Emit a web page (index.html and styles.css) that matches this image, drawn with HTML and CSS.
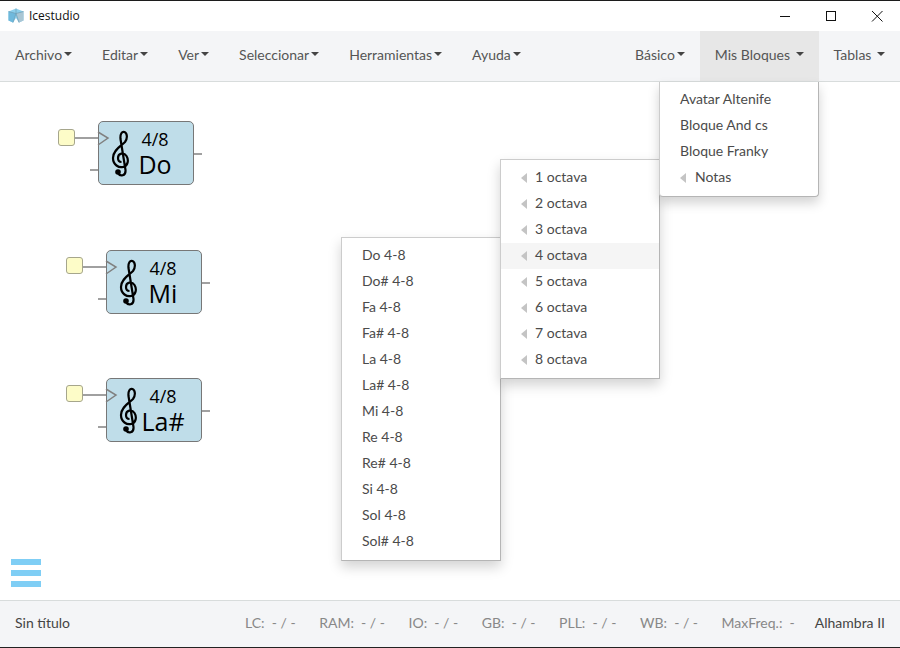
FILE: index.html
```html
<!DOCTYPE html>
<html>
<head>
<meta charset="utf-8" />
<title>Icestudio</title>
<link rel="stylesheet" href="styles.css">
</head>
<body>

<div class="titlebar">
	<svg class="logo" width="16" height="15" viewBox="0 0 16 15">
		<path d="M8 .5 L15.5 3.5 L15.5 12.5 L11 14.5 L8 10 L5 14.5 L.5 12.5 L.5 3.5 Z" fill="#8ccfec"/>
		<path d="M8 5.5 L15.5 3.5 L15.5 12.5 L11 14.5 Z" fill="#a9c6d4"/>
		<path d="M8 5.5 L.5 3.5 L.5 12.5 L5 14.5 Z" fill="#6fb9dc"/>
		<path d="M8 .5 L8 5.5 M.5 3.5 L8 5.5 L15.5 3.5 M8 5.5 L5 14.5 M8 5.5 L11 14.5" fill="none" stroke="#6d9db5" stroke-width=".7"/>
	</svg>
	<span class="apptitle">Icestudio</span>
	<div class="winbtns">
		<svg width="46" height="31" viewBox="0 0 46 31"><path d="M18 15.5 H28" stroke="#111" fill="none"/></svg>
		<svg width="46" height="31" viewBox="0 0 46 31"><rect x="18.5" y="10.5" width="9" height="9" stroke="#111" fill="none"/></svg>
		<svg width="46" height="31" viewBox="0 0 46 31"><path d="M18 10 L28.5 20.5 M28.5 10 L18 20.5" stroke="#111" fill="none"/></svg>
	</div>
</div>

<nav class="menubar">
	<a class="menu">Archivo<i class="caret"></i></a>
	<a class="menu">Editar<i class="caret"></i></a>
	<a class="menu">Ver<i class="caret"></i></a>
	<a class="menu">Seleccionar<i class="caret"></i></a>
	<a class="menu">Herramientas<i class="caret"></i></a>
	<a class="menu">Ayuda<i class="caret"></i></a>
	<span class="spacer"></span>
	<a class="menu">Básico<i class="caret"></i></a>
	<a class="menu open">Mis Bloques <i class="caret wide"></i></a>
	<a class="menu">Tablas <i class="caret wide"></i></a>
</nav>

<main class="canvas">
	<!-- bloques del diagrama -->
	<div class="pin pin1"></div>
	<div class="pin pin2"></div>
	<div class="pin pin3"></div>

	<div class="block b1">
		<svg class="wires" width="130" height="70" viewBox="0 0 130 70"><use href="#wires"/></svg>
		<svg class="clef" width="20" height="48" viewBox="0 0 20 48"><use href="#clef"/></svg>
		<div class="blocktext"><span class="frac">4/8</span><span class="note">Do</span></div>
	</div>
	<div class="block b2">
		<svg class="wires" width="130" height="70" viewBox="0 0 130 70"><use href="#wires"/></svg>
		<svg class="clef" width="20" height="48" viewBox="0 0 20 48"><use href="#clef"/></svg>
		<div class="blocktext"><span class="frac">4/8</span><span class="note">Mi</span></div>
	</div>
	<div class="block b3">
		<svg class="wires" width="130" height="70" viewBox="0 0 130 70"><use href="#wires"/></svg>
		<svg class="clef" width="20" height="48" viewBox="0 0 20 48"><use href="#clef"/></svg>
		<div class="blocktext"><span class="frac">4/8</span><span class="note">La#</span></div>
	</div>

	<div class="burger"><span></span><span></span><span></span></div>

	<ul class="dropdown dd1">
		<li>Avatar Altenife</li>
		<li>Bloque And cs</li>
		<li>Bloque Franky</li>
		<li class="sub"><i class="arrow"></i>Notas</li>
	</ul>
	<ul class="dropdown dd2">
		<li class="sub"><i class="arrow"></i>1 octava</li>
		<li class="sub"><i class="arrow"></i>2 octava</li>
		<li class="sub"><i class="arrow"></i>3 octava</li>
		<li class="sub hover"><i class="arrow"></i>4 octava</li>
		<li class="sub"><i class="arrow"></i>5 octava</li>
		<li class="sub"><i class="arrow"></i>6 octava</li>
		<li class="sub"><i class="arrow"></i>7 octava</li>
		<li class="sub"><i class="arrow"></i>8 octava</li>
	</ul>
	<ul class="dropdown dd3">
		<li>Do 4-8</li>
		<li>Do# 4-8</li>
		<li>Fa 4-8</li>
		<li>Fa# 4-8</li>
		<li>La 4-8</li>
		<li>La# 4-8</li>
		<li>Mi 4-8</li>
		<li>Re 4-8</li>
		<li>Re# 4-8</li>
		<li>Si 4-8</li>
		<li>Sol 4-8</li>
		<li>Sol# 4-8</li>
	</ul>
</main>

<footer class="statusbar">
	<span class="filename">Sin título</span>
	<span class="spacer"></span>
	<span class="stat">LC:&nbsp; - / -</span>
	<span class="stat">RAM:&nbsp; - / -</span>
	<span class="stat">IO:&nbsp; - / -</span>
	<span class="stat">GB:&nbsp; - / -</span>
	<span class="stat">PLL:&nbsp; - / -</span>
	<span class="stat">WB:&nbsp; - / -</span>
	<span class="stat">MaxFreq.:&nbsp; -</span>
	<span class="board">Alhambra II</span>
</footer>

<svg class="defs" width="0" height="0">
	<defs>
		<g id="wires" fill="none" stroke="#808080" stroke-width="1.5">
			<path d="M0 16 H23"/>
			<path d="M23 10 L33 16 L23 23"/>
			<path d="M15 48 H23"/>
			<path d="M119 32 H127"/>
		</g>
		<g id="clef">
			<path d="M7 43 C9 47 15 46 14.5 40 L9.5 9 C9 4 11 1 13.5 2 C16 3 17 8 14 12 C10 16 2 20 2 28 C2 35 8 38 12 37 C17 36 18 30 15.5 26 C13 22 7 23 7 28 C7 31 9 32 10.5 32" fill="none" stroke="#000" stroke-width="2.2"/>
			<circle cx="7" cy="42" r="2.8" fill="#000"/>
		</g>
	</defs>
</svg>

</body>
</html>
```

FILE: styles.css
```css
html, body {
	margin: 0;
	padding: 0;
}
body {
	width: 900px;
	height: 648px;
	overflow: hidden;
	display: flex;
	flex-direction: column;
	font-family: Lato, "Liberation Sans", sans-serif;
	font-size: 14px;
	color: #4b4b4b;
	background: #fff;
}

/* barra de titulo */
.titlebar {
	height: 30px;
	flex: none;
	display: flex;
	align-items: center;
	border-top: 1px solid #1c1c1c;
	background: #fff;
}
.logo {
	margin-left: 8px;
	margin-right: 5px;
	margin-bottom: 2px;
}
.apptitle {
	font-family: "Open Sans", sans-serif;
	font-size: 12px;
	color: #111;
	padding-bottom: 2px;
}
.winbtns {
	margin-left: auto;
	display: flex;
	padding-right: 0;
}

/* menu */
.menubar {
	height: 50px;
	flex: none;
	display: flex;
	align-items: stretch;
	background: #f4f5f7;
	border-bottom: 1px solid #d8dcdc;
}
.menu {
	display: flex;
	align-items: center;
	padding: 0 15px 4px;
	white-space: pre;
	font-size: 14px;
	color: #555;
}
.menu.open {
	background: #e7e7e7;
}
.caret {
	display: inline-block;
	width: 0;
	height: 0;
	margin-left: 2px;
	border-top: 4px solid #444;
	border-left: 4px solid transparent;
	border-right: 4px solid transparent;
}
.spacer {
	flex: 1;
}

/* lienzo */
.canvas {
	position: relative;
	flex: 1;
	background: #fff;
}
.pin {
	position: absolute;
	width: 15px;
	height: 15px;
	background: #fdfcc8;
	border: 1px solid #a6a68c;
	border-radius: 3px;
}
.pin1 { left: 58px; top: 47px; }
.pin2 { left: 66px; top: 175px; }
.pin3 { left: 66px; top: 303px; }

.block {
	position: absolute;
	width: 94px;
	height: 62px;
	background: #bfdde9;
	border: 1px solid #777;
	border-radius: 5px;
	color: #000;
}
.b1 { left: 98px; top: 39px; }
.b2 { left: 106px; top: 168px; }
.b3 { left: 106px; top: 296px; }
.wires {
	position: absolute;
	left: -24px;
	top: 0;
	overflow: visible;
}
.clef {
	position: absolute;
	left: 12px;
	top: 8px;
}
.blocktext {
	position: absolute;
	left: 26px;
	top: 5px;
	width: 60px;
	display: flex;
	flex-direction: column;
	align-items: center;
	font-family: "Open Sans", sans-serif;
}
.frac {
	font-size: 18px;
	line-height: 24px;
}
.note {
	font-size: 25px;
	line-height: 27px;
}

.burger {
	position: absolute;
	left: 11px;
	top: 477px;
	width: 30px;
	display: flex;
	flex-direction: column;
	gap: 5px;
}
.burger span {
	height: 6px;
	background: #7fcef5;
}

/* desplegables */
.dropdown {
	position: absolute;
	width: 158px;
	margin: 0;
	padding: 5px 0;
	list-style: none;
	background: #fff;
	border: 1px solid #ccc;
	border-color: #ccc #b5b5b5 #b5b5b5 #ccc;
	box-shadow: 0 6px 12px rgba(0,0,0,.175);
	font-size: 14px;
	color: #4b4b4b;
}
.dropdown li {
	height: 26px;
	line-height: 24px;
	padding-left: 20px;
	white-space: nowrap;
}
.dropdown li.sub {
	display: flex;
	align-items: center;
	padding-bottom: 2px;
	height: 24px;
}
.dropdown li.hover {
	background: #f5f5f5;
}
.arrow {
	display: inline-block;
	width: 0;
	height: 0;
	margin-right: 8px;
	margin-top: 2px;
	border-right: 6px solid #c4c4c4;
	border-top: 5px solid transparent;
	border-bottom: 5px solid transparent;
}
.dd1 { left: 659px; top: 0; border-top: 0; border-radius: 0 0 4px 4px; z-index: 3; }
.dd1 .arrow { margin-right: 9px; }
.dd2 { left: 500px; top: 77px; z-index: 2; }
.dd3 { left: 341px; top: 155px; z-index: 1; }

/* estado */
.statusbar {
	box-sizing: border-box;
	height: 48px;
	flex: none;
	display: flex;
	align-items: center;
	padding: 0 15px 3px;
	gap: 23.5px;
	background: #f4f5f7;
	border-top: 1px solid #d8dcdc;
	border-bottom: 1px solid #222;
	font-size: 14px;
}
.filename, .board {
	color: #444;
}
.stat {
	color: #888;
}
.board {
	margin-left: -3.5px;
}
.defs {
	position: absolute;
}
```
